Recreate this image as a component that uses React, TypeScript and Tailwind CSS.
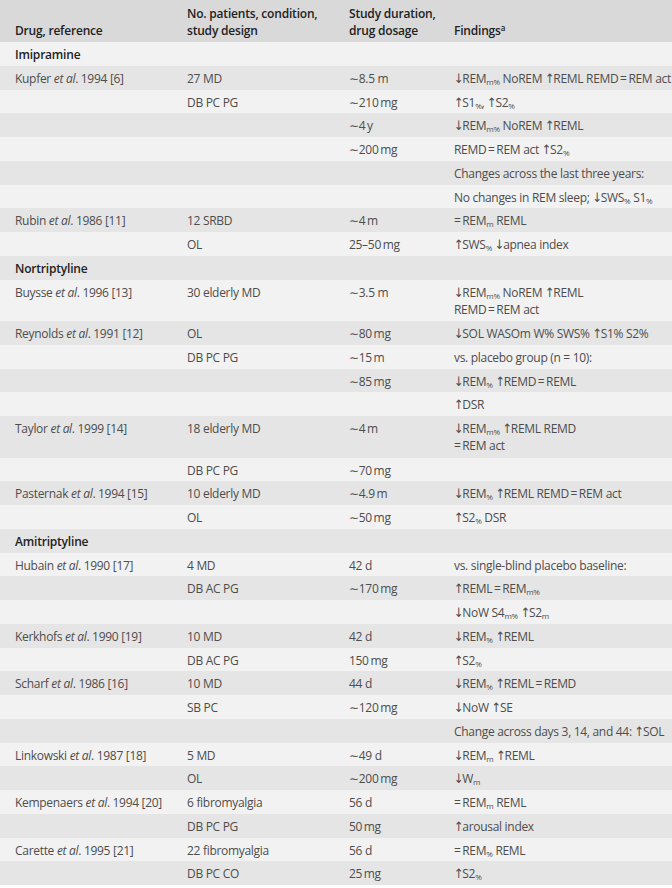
import React from "react";

type Cell = React.ReactNode;
type Row = { c1?: Cell; c2?: Cell; c3?: Cell; c4?: Cell; group?: boolean; tall?: boolean };

const S = ({ children }: { children: React.ReactNode }) => (
  <span className="relative top-[2px] text-[8px] leading-none tracking-[-0.3px]">{children}</span>
);

const arrowFont = { fontFamily: '"DejaVu Sans Condensed", "DejaVu Sans", sans-serif' };
const Up = () => (
  <span className="tracking-[-1.5px] text-[13px] leading-none" style={arrowFont}>
    {"\u2191"}
  </span>
);
const Dn = () => (
  <span className="tracking-[-1.5px] text-[13px] leading-none" style={arrowFont}>
    {"\u2193"}
  </span>
);

const Au = ({ name, rest }: { name: string; rest: string }) => (
  <>
    {name} <i>et al</i>. {rest}
  </>
);

const T = "\u223C";
const TS = "\u2009";

const rows: Row[] = [
  { c1: "Imipramine", group: true },
  {
    c1: <Au name="Kupfer" rest="1994 [6]" />,
    c2: "27 MD",
    c3: `${T}8.5 m`,
    c4: (
      <>
        <Dn />REM<S>m%</S> NoREM <Up />REML REMD{TS}={TS}REM act
      </>
    ),
  },
  {
    c2: "DB PC PG",
    c3: `${T}210${TS}mg`,
    c4: (
      <>
        <Up />S1<S>%</S>, <Up />S2<S>%</S>
      </>
    ),
  },
  {
    c3: `${T}4${TS}y`,
    c4: (
      <>
        <Dn />REM<S>m%</S> NoREM <Up />REML
      </>
    ),
  },
  {
    c3: `${T}200${TS}mg`,
    c4: (
      <>
        REMD{TS}={TS}REM act <Up />S2<S>%</S>
      </>
    ),
  },
  { c4: "Changes across the last three years:" },
  {
    c4: (
      <>
        No changes in REM sleep; <Dn />SWS<S>%</S> S1<S>%</S>
      </>
    ),
  },
  {
    c1: <Au name="Rubin" rest="1986 [11]" />,
    c2: "12 SRBD",
    c3: `${T}4${TS}m`,
    c4: (
      <>
        ={TS}REM<S>m</S> REML
      </>
    ),
  },
  {
    c2: "OL",
    c3: `25–50${TS}mg`,
    c4: (
      <>
        <Up />SWS<S>%</S> <Dn />apnea index
      </>
    ),
  },
  { c1: "Nortriptyline", group: true },
  {
    tall: true,
    c1: <Au name="Buysse" rest="1996 [13]" />,
    c2: "30 elderly MD",
    c3: `${T}3.5 m`,
    c4: (
      <>
        <Dn />REM<S>m%</S> NoREM <Up />REML
        <br />
        REMD{TS}={TS}REM act
      </>
    ),
  },
  {
    c1: <Au name="Reynolds" rest="1991 [12]" />,
    c2: "OL",
    c3: `${T}80${TS}mg`,
    c4: (
      <>
        <Dn />SOL WASOm W% SWS% <Up />S1% S2%
      </>
    ),
  },
  { c2: "DB PC PG", c3: `${T}15${TS}m`, c4: "vs. placebo group (n = 10):" },
  {
    c3: `${T}85${TS}mg`,
    c4: (
      <>
        <Dn />REM<S>%</S> <Up />REMD{TS}={TS}REML
      </>
    ),
  },
  {
    c4: (
      <>
        <Up />DSR
      </>
    ),
  },
  {
    tall: true,
    c1: <Au name="Taylor" rest="1999 [14]" />,
    c2: "18 elderly MD",
    c3: `${T}4${TS}m`,
    c4: (
      <>
        <Dn />REM<S>m%</S> <Up />REML REMD
        <br />={TS}REM act
      </>
    ),
  },
  { c2: "DB PC PG", c3: `${T}70${TS}mg` },
  {
    c1: <Au name="Pasternak" rest="1994 [15]" />,
    c2: "10 elderly MD",
    c3: `${T}4.9${TS}m`,
    c4: (
      <>
        <Dn />REM<S>%</S> <Up />REML REMD{TS}={TS}REM act
      </>
    ),
  },
  {
    c2: "OL",
    c3: `${T}50${TS}mg`,
    c4: (
      <>
        <Up />S2<S>%</S> DSR
      </>
    ),
  },
  { c1: "Amitriptyline", group: true },
  {
    c1: <Au name="Hubain" rest="1990 [17]" />,
    c2: "4 MD",
    c3: "42 d",
    c4: "vs. single-blind placebo baseline:",
  },
  {
    c2: "DB AC PG",
    c3: `${T}170${TS}mg`,
    c4: (
      <>
        <Up />REML{TS}={TS}REM<S>m%</S>
      </>
    ),
  },
  {
    c4: (
      <>
        <Dn />NoW S4<S>m%</S> <Up />S2<S>m</S>
      </>
    ),
  },
  {
    c1: <Au name="Kerkhofs" rest="1990 [19]" />,
    c2: "10 MD",
    c3: "42 d",
    c4: (
      <>
        <Dn />REM<S>%</S> <Up />REML
      </>
    ),
  },
  {
    c2: "DB AC PG",
    c3: `150${TS}mg`,
    c4: (
      <>
        <Up />S2<S>%</S>
      </>
    ),
  },
  {
    c1: <Au name="Scharf" rest="1986 [16]" />,
    c2: "10 MD",
    c3: "44 d",
    c4: (
      <>
        <Dn />REM<S>%</S> <Up />REML{TS}={TS}REMD
      </>
    ),
  },
  {
    c2: "SB PC",
    c3: `${T}120${TS}mg`,
    c4: (
      <>
        <Dn />NoW <Up />SE
      </>
    ),
  },
  {
    c4: (
      <>
        Change across days 3, 14, and 44: <Up />SOL
      </>
    ),
  },
  {
    c1: <Au name="Linkowski" rest="1987 [18]" />,
    c2: "5 MD",
    c3: `${T}49 d`,
    c4: (
      <>
        <Dn />REM<S>m</S> <Up />REML
      </>
    ),
  },
  {
    c2: "OL",
    c3: `${T}200${TS}mg`,
    c4: (
      <>
        <Dn />W<S>m</S>
      </>
    ),
  },
  {
    c1: <Au name="Kempenaers" rest="1994 [20]" />,
    c2: "6 fibromyalgia",
    c3: "56 d",
    c4: (
      <>
        ={TS}REM<S>m</S> REML
      </>
    ),
  },
  {
    c2: "DB PC PG",
    c3: `50${TS}mg`,
    c4: (
      <>
        <Up />arousal index
      </>
    ),
  },
  {
    c1: <Au name="Carette" rest="1995 [21]" />,
    c2: "22 fibromyalgia",
    c3: "56 d",
    c4: (
      <>
        ={TS}REM<S>%</S> REML
      </>
    ),
  },
  {
    c2: "DB PC CO",
    c3: `25${TS}mg`,
    c4: (
      <>
        <Up />S2<S>%</S>
      </>
    ),
  },
];

export default function App() {
  return (
    <div
      className="w-[672px] h-[888px] overflow-hidden bg-white text-[12px] leading-[17px] tracking-[-0.3px] text-[#4d4d4d]"
      style={{ fontFamily: '"Open Sans", "DejaVu Sans", sans-serif' }}
    >
      <div className="grid h-[42px] grid-cols-[172px_162px_105px_1fr] pl-[15px] pb-[3px] bg-[#d9d9d9] font-semibold text-[#222] items-end tracking-[-0.2px]">
        <div>Drug, reference</div>
        <div>
          No. patients, condition,
          <br />
          study design
        </div>
        <div>
          Study duration,
          <br />
          drug dosage
        </div>
        <div>
          Findings<sup className="text-[8px] relative -top-[4px] align-baseline">a</sup>
        </div>
      </div>
      {rows.map((r, i) => (
        <div
          key={i}
          className={`grid grid-cols-[172px_162px_105px_1fr] items-start pl-[15px] pt-[4px] overflow-hidden whitespace-nowrap ${
            r.tall ? "h-[41.5px]" : "h-[23.75px]"
          } ${i % 2 === 0 ? "bg-[#f2f2f2]" : "bg-[#e5e5e5]"}`}
        >
          <div className={r.group ? "font-semibold text-[#222] tracking-[-0.2px]" : ""}>{r.c1}</div>
          <div>{r.c2}</div>
          <div>{r.c3}</div>
          <div>{r.c4}</div>
        </div>
      ))}
    </div>
  );
}
